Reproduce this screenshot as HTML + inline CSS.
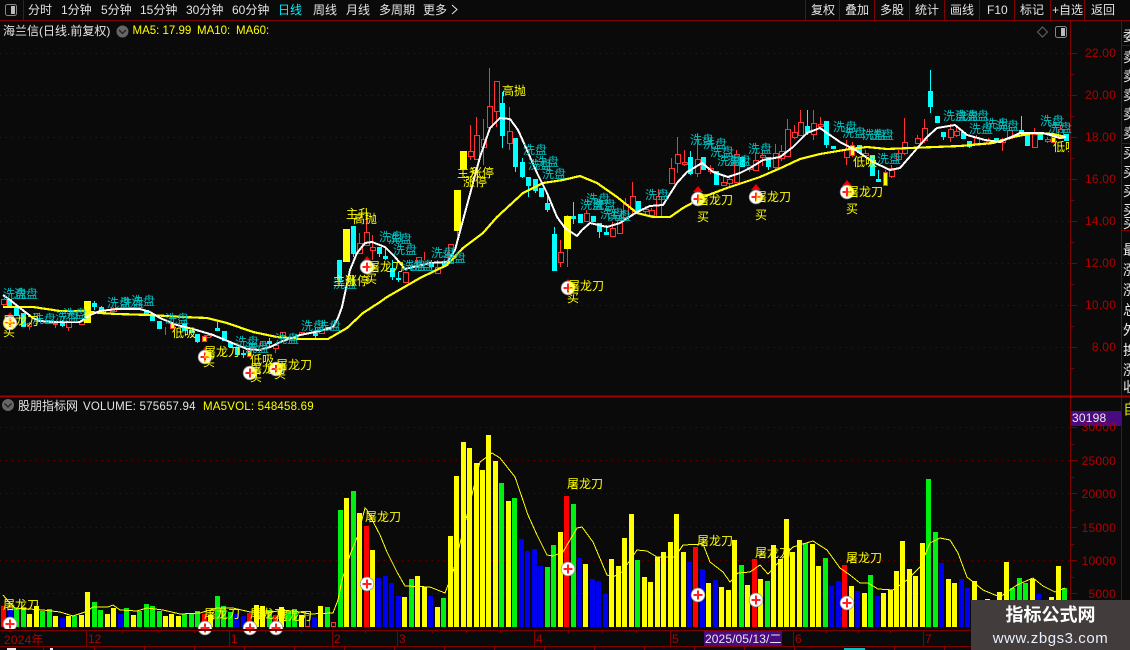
<!DOCTYPE html>
<html><head><meta charset="utf-8">
<style>
html,body{margin:0;padding:0;background:#0a0a0a}
#p{position:relative;width:1130px;height:650px;overflow:hidden;background:#0a0a0a;font-family:"Liberation Sans","WenQuanYi Zen Hei","Noto Sans CJK SC",sans-serif}
#v{position:absolute;left:1.3px;top:420px;height:207px;display:flex;align-items:flex-end}
#v i{flex:none;width:6.48px;display:block}
#v i::before{content:"";display:block;width:5px;height:100%;box-sizing:border-box}
.y::before{background:#ff0}.g::before{background:#00f010}.b::before{background:#0000f0}.r::before{background:#f00}.h::before{border:1px solid #f33}
svg{position:absolute;left:0;top:0}
text{font-family:"Liberation Sans","WenQuanYi Zen Hei","Noto Sans CJK SC",sans-serif;font-size:12px}
.c text{fill:#00c4c4}
.l text{fill:#ff0}
.ax text{fill:#b00000;text-anchor:end;letter-spacing:.2px}
.t text{fill:#e4e4e4}
.w text{fill:#e8e8e8;font-size:14px}
#wm{position:absolute;left:971px;top:600px;width:159px;height:50px;background:#423c3c;color:#fff;text-align:center}
#wm div{font-family:"Liberation Sans","Noto Sans CJK SC",sans-serif}
</style></head><body><div id="p">
<svg width="1130" height="650" shape-rendering="crispEdges">
<g stroke="#6a0000" stroke-dasharray="1 5" stroke-width="1">
<path d="M0 53.5H1071M0 95.5H1071M0 137.5H1071M0 179.5H1071M0 221.5H1071M0 263.5H1071M0 305.5H1071M0 347.5H1071M0 427.5H1071M0 460.5H1071M0 493.5H1071M0 527.5H1071M0 560.5H1071M0 593.5H1071"/>
</g>
<g fill="none" stroke="#800000">
<path d="M0 20.5H1130M23.5 0V20M805.5 0V20M839.5 0V20M874.5 0V20M909.5 0V20M944.5 0V20M979.5 0V20M1014.5 0V20M1050.5 0V20M1084.5 0V20"/>
<path d="M1070.5 20V630M1121.5 20V650M1121 45.5H1130M1121 143.5H1130M1121 230.5H1130M1121 327.5H1130M1121 396.5H1130"/>
<path d="M1070 53.5h7M1070 74.5h4M1070 95.5h7M1070 116.5h4M1070 137.5h7M1070 158.5h4M1070 179.5h7M1070 200.5h4M1070 221.5h7M1070 242.5h4M1070 263.5h7M1070 284.5h4M1070 305.5h7M1070 326.5h4M1070 347.5h7M1070 368.5h4M1070 427.5h7M1070 444.5h4M1070 460.5h7M1070 477.5h4M1070 493.5h7M1070 510.5h4M1070 527.5h7M1070 544.5h4M1070 560.5h7M1070 577.5h4M1070 593.5h7M1070 610.5h4"/>
<path d="M0 630.5H1122M0 646.5H1122M86.5 630V646M229.5 630V646M332.5 630V646M397.5 630V646M534.5 630V646M670.5 630V646M793.5 630V646M923.5 630V646M122.5 630v3M158.5 630v3M194.5 630v3M265.5 630v3M301.5 630v3M365.5 630v3M432.5 630v3M466.5 630v3M500.5 630v3M568.5 630v3M602.5 630v3M636.5 630v3M826.5 630v3M858.5 630v3M890.5 630v3M43.5 647v3M94.5 647v3M144.5 647v3M194.5 647v3M244.5 647v3M294.5 647v3M344.5 647v3M394.5 647v3M444.5 647v3M494.5 647v3M544.5 647v3M594.5 647v3M644.5 647v3M694.5 647v3M744.5 647v3M794.5 647v3M844.5 647v3M894.5 647v3M944.5 647v3"/>
</g>
<path d="M0 396.5H1130" stroke="#a00000" stroke-width="2"/>
<rect x="1071" y="411" width="50" height="15" fill="#4a0a80"/>
<rect x="704" y="631" width="78" height="15" fill="#4a0a80"/>
</svg>

<div id="v"><i class=r style=height:21px></i><i class=b style=height:17px></i><i class=g style=height:19px></i><i class=g style=height:20px></i><i class=y style=height:13px></i><i class=y style=height:21px></i><i class=g style=height:16px></i><i class=g style=height:18px></i><i class=y style=height:11px></i><i class=b style=height:9px></i><i class=y style=height:11px></i><i class=g style=height:11px></i><i class=y style=height:12px></i><i class=y style=height:35px></i><i class=g style=height:25px></i><i class=g style=height:17px></i><i class=y style=height:13px></i><i class=y style=height:19px></i><i class=b style=height:13px></i><i class=g style=height:19px></i><i class=y style=height:12px></i><i class=g style=height:16px></i><i class=g style=height:23px></i><i class=g style=height:21px></i><i class=g style=height:16px></i><i class=y style=height:11px></i><i class=y style=height:13px></i><i class=y style=height:11px></i><i class=g style=height:13px></i><i class=g style=height:13px></i><i class=g style=height:16px></i><i class=r style=height:13px></i><i class=y style=height:12px></i><i class=g style=height:31px></i><i class=g style=height:21px></i><i class=g style=height:15px></i><i class=b style=height:13px></i><i class=b style=height:11px></i><i class=r style=height:14px></i><i class=y style=height:22px></i><i class=y style=height:21px></i><i class=g style=height:17px></i><i class=r style=height:12px></i><i class=y style=height:20px></i><i class=g style=height:16px></i><i class=g style=height:18px></i><i class=y style=height:12px></i><i class=h style=height:12px></i><i class=b style=height:10px></i><i class=y style=height:21px></i><i class=g style=height:20px></i><i class=h style=height:5px></i><i class=g style=height:117px></i><i class=y style=height:129px></i><i class=g style=height:136px></i><i class=y style=height:114px></i><i class=r style=height:101px></i><i class=y style=height:77px></i><i class=b style=height:49px></i><i class=b style=height:51px></i><i class=b style=height:44px></i><i class=b style=height:31px></i><i class=y style=height:30px></i><i class=g style=height:48px></i><i class=y style=height:51px></i><i class=y style=height:40px></i><i class=b style=height:31px></i><i class=y style=height:20px></i><i class=g style=height:29px></i><i class=y style=height:91px></i><i class=y style=height:151px></i><i class=y style=height:185px></i><i class=y style=height:179px></i><i class=y style=height:164px></i><i class=y style=height:157px></i><i class=y style=height:192px></i><i class=y style=height:166px></i><i class=g style=height:144px></i><i class=y style=height:126px></i><i class=g style=height:129px></i><i class=b style=height:88px></i><i class=b style=height:76px></i><i class=b style=height:78px></i><i class=b style=height:61px></i><i class=g style=height:60px></i><i class=g style=height:82px></i><i class=y style=height:95px></i><i class=r style=height:131px></i><i class=g style=height:123px></i><i class=b style=height:69px></i><i class=y style=height:63px></i><i class=b style=height:48px></i><i class=b style=height:46px></i><i class=b style=height:33px></i><i class=y style=height:68px></i><i class=y style=height:61px></i><i class=y style=height:89px></i><i class=y style=height:113px></i><i class=g style=height:67px></i><i class=y style=height:50px></i><i class=y style=height:45px></i><i class=y style=height:70px></i><i class=y style=height:75px></i><i class=y style=height:85px></i><i class=y style=height:113px></i><i class=y style=height:75px></i><i class=b style=height:65px></i><i class=r style=height:80px></i><i class=b style=height:58px></i><i class=y style=height:44px></i><i class=b style=height:47px></i><i class=y style=height:40px></i><i class=y style=height:37px></i><i class=y style=height:87px></i><i class=g style=height:62px></i><i class=y style=height:42px></i><i class=r style=height:68px></i><i class=y style=height:48px></i><i class=g style=height:46px></i><i class=y style=height:82px></i><i class=y style=height:68px></i><i class=y style=height:108px></i><i class=y style=height:75px></i><i class=y style=height:87px></i><i class=g style=height:84px></i><i class=y style=height:83px></i><i class=y style=height:61px></i><i class=g style=height:69px></i><i class=b style=height:41px></i><i class=b style=height:46px></i><i class=r style=height:62px></i><i class=y style=height:41px></i><i class=b style=height:36px></i><i class=y style=height:34px></i><i class=g style=height:52px></i><i class=b style=height:31px></i><i class=y style=height:34px></i><i class=y style=height:37px></i><i class=y style=height:56px></i><i class=y style=height:86px></i><i class=y style=height:58px></i><i class=y style=height:51px></i><i class=y style=height:84px></i><i class=g style=height:148px></i><i class=g style=height:95px></i><i class=b style=height:64px></i><i class=y style=height:48px></i><i class=y style=height:44px></i><i class=b style=height:48px></i><i class=b style=height:39px></i><i class=y style=height:46px></i><i class=y style=height:27px></i><i class=y style=height:28px></i><i class=y style=height:24px></i><i class=y style=height:35px></i><i class=y style=height:65px></i><i class=g style=height:39px></i><i class=g style=height:49px></i><i class=g style=height:44px></i><i class=y style=height:48px></i><i class=b style=height:33px></i><i class=y style=height:25px></i><i class=y style=height:30px></i><i class=y style=height:61px></i><i class=g style=height:39px></i></div>

<svg width="1130" height="650">
<g shape-rendering="crispEdges">
<path stroke="#f33" fill="none" d="M3.5 299v8M29.5 322v8M36.5 313v8M55.5 323v5M68.5 322v9M107.5 309v4M113.5 307v5M165.5 327v8M204.5 335v3M211.5 333v4M262.5 341v6M275.5 345v8M282.5 332v6M301.5 332v3M321.5 330v4M366.5 218v28M359.5 233v20M372.5 235v25M418.5 257v10M424.5 252v8M437.5 260v13M450.5 244v19M457.5 231v5M470.5 125v35M476.5 117v43M483.5 119v46M489.5 68v60M496.5 81v46M509.5 107v43M560.5 240v27M567.5 215v52M586.5 210v11M612.5 222v14M619.5 216v17M625.5 198v20M632.5 182v32M645.5 206v8M651.5 208v7M658.5 189v27M671.5 158v25M677.5 137v36M684.5 150v16M697.5 133v44M710.5 165v9M723.5 175v10M729.5 175v11M736.5 150v32M749.5 167v5M755.5 152v18M762.5 150v16M775.5 144v26M781.5 145v16M787.5 119v37M794.5 125v14M800.5 110v25M813.5 110v30M820.5 117v12M846.5 140v25M852.5 142v15M865.5 150v8M885.5 170v16M891.5 165v13M898.5 150v12M904.5 118v37M917.5 135v9M924.5 119v24M950.5 124v18M956.5 127v10M976.5 135v9M988.5 138v7M1002.5 138v13M1009.5 125v15M1034.5 128v19M1047.5 137v6M1060.5 125v13"/>
<path fill="none" stroke="#0ff" d="M62.5 320v7M94.5 301v9M101.5 306v7M197.5 334v9M217.5 322v9M243.5 350v8M269.5 338v9M315.5 328v10M353.5 226v31M379.5 247v10M385.5 248v12M392.5 260v20M398.5 272v10M431.5 260v9M502.5 92v56M515.5 138v34M522.5 158v20M528.5 177v20M535.5 179v14M547.5 195v17M554.5 227v44M573.5 202v22M599.5 223v15M606.5 225v10M690.5 151v24M768.5 157v13M807.5 110v25M826.5 121v27M878.5 170v12M930.5 70v43M943.5 132v8M969.5 141v7M1021.5 116v17"/>
<path fill="#0ff" d="M7 299h5v7h-5zM14 306h5v10h-5zM21 313h5v14h-5zM60 323h5v3h-5zM92 303h5v4h-5zM99 307h5v5h-5zM144 310h5v5h-5zM150 315h5v6h-5zM157 321h5v8h-5zM182 323h5v8h-5zM189 330h5v3h-5zM195 334h5v8h-5zM215 328h5v3h-5zM222 331h5v10h-5zM228 342h5v5h-5zM235 347h5v8h-5zM241 353h5v2h-5zM267 341h5v3h-5zM313 333h5v3h-5zM326 327h5v3h-5zM337 260h5v20h-5zM351 226h5v28h-5zM377 247h5v7h-5zM383 256h5v3h-5zM390 268h5v9h-5zM396 278h5v2h-5zM429 262h5v5h-5zM442 263h5v3h-5zM500 103h5v33h-5zM513 138h5v29h-5zM520 162h5v15h-5zM526 177h5v9h-5zM533 179h5v12h-5zM539 188h5v9h-5zM545 203h5v7h-5zM552 234h5v37h-5zM571 216h5v3h-5zM578 214h5v9h-5zM591 216h5v6h-5zM597 223h5v9h-5zM604 232h5v3h-5zM636 201h5v10h-5zM688 157h5v17h-5zM701 157h5v13h-5zM714 171h5v14h-5zM740 157h5v10h-5zM766 157h5v10h-5zM805 126h5v7h-5zM824 121h5v24h-5zM831 146h5v3h-5zM857 145h5v8h-5zM870 155h5v21h-5zM876 179h5v3h-5zM928 91h5v16h-5zM935 116h5v7h-5zM941 132h5v5h-5zM961 132h5v7h-5zM967 141h5v6h-5zM994 138h5v4h-5zM1019 130h5v3h-5zM1025 135h5v11h-5zM1038 133h5v7h-5zM1064 134h5v7h-5z"/>
<path fill="#0a0a0a" stroke="#f33" d="M1.5 299.5h5v5h-5zM27.5 323.5h4v3h-4zM34.5 313.5h5v8h-5zM53.5 323.5h4v1h-4zM66.5 322.5h5v5h-5zM79.5 321.5h5v3h-5zM105.5 310.5h5v3h-5zM111.5 308.5h5v3h-5zM130.5 307.5h5v2h-5zM205.5 335.5h5v2h-5zM260.5 341.5h5v4h-5zM273.5 345.5h5v3h-5zM280.5 332.5h5v5h-5zM299.5 332.5h5v2h-5zM319.5 330.5h5v3h-5zM357.5 243.5h5v10h-5zM364.5 232.5h5v13h-5zM370.5 247.5h5v3h-5zM403.5 272.5h5v10h-5zM416.5 257.5h5v10h-5zM435.5 267.5h5v6h-5zM448.5 244.5h5v19h-5zM468.5 151.5h5v5h-5zM474.5 135.5h5v24h-5zM481.5 139.5h5v8h-5zM487.5 106.5h5v21h-5zM494.5 81.5h5v30h-5zM507.5 131.5h5v12h-5zM558.5 252.5h5v10h-5zM584.5 213.5h5v8h-5zM610.5 228.5h5v8h-5zM617.5 220.5h5v13h-5zM623.5 204.5h5v14h-5zM630.5 196.5h5v13h-5zM643.5 209.5h5v2h-5zM649.5 210.5h5v5h-5zM656.5 196.5h5v20h-5zM669.5 168.5h5v15h-5zM675.5 154.5h5v9h-5zM682.5 162.5h5v2h-5zM695.5 159.5h5v14h-5zM708.5 168.5h5v3h-5zM721.5 182.5h5v3h-5zM727.5 179.5h5v4h-5zM734.5 154.5h5v28h-5zM747.5 167.5h5v2h-5zM753.5 160.5h5v10h-5zM760.5 155.5h5v2h-5zM773.5 153.5h5v14h-5zM779.5 151.5h5v7h-5zM785.5 129.5h5v27h-5zM792.5 132.5h5v5h-5zM798.5 122.5h5v13h-5zM811.5 123.5h5v11h-5zM818.5 124.5h5v2h-5zM844.5 149.5h5v8h-5zM863.5 153.5h5v2h-5zM889.5 168.5h5v8h-5zM896.5 153.5h5v6h-5zM902.5 142.5h5v11h-5zM915.5 138.5h5v5h-5zM922.5 128.5h5v12h-5zM948.5 129.5h5v8h-5zM954.5 131.5h5v4h-5zM974.5 137.5h5v6h-5zM986.5 140.5h5v3h-5zM1000.5 139.5h5v3h-5zM1007.5 130.5h5v8h-5zM1032.5 134.5h5v13h-5zM1045.5 139.5h5v2h-5zM1058.5 129.5h5v9h-5z"/>
<path fill="#ff0" d="M84 301h7v22h-7zM343 229h7v33h-7zM454 190h7v41h-7zM460 151h7v18h-7zM564 216h7v33h-7z"/>
<path fill="#ff0" stroke="#f33" d="M170.5 323.5h4v5h-4zM202.5 336.5h4v5h-4zM247.5 350.5h4v6h-4zM850.5 145.5h4v10h-4zM883.5 172.5h4v13h-4zM1051.5 137.5h4v5h-4z"/>
</g>
<g fill="none" shape-rendering="crispEdges">
<polyline stroke="#ff0" stroke-width="2.2" points="3,307 33,307 60,311 83,311 100,313 117,314 150,315 183,317 207,318 227,323 253,332 277,337 300,339 328,339 347,328 363,313 380,302 387,297 420,278 447,265 463,248 483,233 497,217 523,193 543,183 563,180 580,176 597,183 617,197 637,213 653,217 670,217 683,208 703,197 727,188 760,177 783,167 800,159 820,154 850,149 867,147 887,149 910,148 960,146 993,143 1013,137 1033,133 1053,134 1066,137"/>
<polyline stroke="#fff" stroke-width="2" points="3,295 10,300 20,308 33,318 40,321 53,322 80,322 90,315 100,311 117,309 140,309 150,312 160,318 177,325 193,329 213,335 230,342 247,349 260,350 270,347 283,341 300,335 320,331 333,327 338,318 342,307 350,270 357,253 365,243 372,242 385,247 395,257 405,269 430,263 447,262 455,250 463,220 473,183 480,157 490,128 500,118 510,119 518,130 527,150 537,173 547,193 557,217 565,228 577,236 582,230 590,223 607,227 620,223 637,212 650,206 663,205 677,183 687,172 702,163 713,172 728,177 740,173 750,168 763,160 780,157 793,147 807,133 820,128 827,133 840,142 857,151 873,162 890,170 900,168 913,153 927,137 937,128 955,125 967,135 985,140 1000,142 1020,133 1043,133 1060,138 1066,137"/>
<polyline stroke="#ff0" stroke-width="1" points="3,595 8,601 15,608 43,610 60,612 73,616 85,612 93,607 108,607 113,605 120,610 137,611 147,608 163,610 180,614 200,613 217,608 233,608 250,612 267,613 283,610 300,612 310,614 333,613 338,600 342,580 350,555 358,535 365,508 367,510 380,535 387,552 397,572 405,586 430,587 445,593 453,572 467,515 480,462 492,453 500,458 515,477 528,515 537,535 547,555 553,556 563,552 577,528 582,527 593,542 607,575 613,577 622,572 637,550 647,551 657,557 675,557 683,545 703,544 710,562 723,572 730,582 738,573 750,572 760,565 768,574 778,563 793,547 813,541 827,550 840,568 850,575 860,583 868,583 878,589 893,590 907,580 920,567 930,543 940,538 950,540 958,553 967,577 983,590 1000,597 1017,585 1033,578 1043,586 1055,592 1065,588"/>
</g>
<g class="c">
<text x="3" y="298">洗盘</text><text x="14" y="298">洗盘</text><text x="32" y="323">洗盘</text><text x="55" y="321">洗盘</text><text x="63" y="318">洗盘</text><text x="107" y="307">洗盘</text><text x="120" y="307">洗盘</text><text x="131" y="305">洗盘</text><text x="165" y="323">洗盘</text><text x="235" y="346">洗盘</text><text x="245" y="352">洗盘</text><text x="275" y="343">洗盘</text><text x="301" y="330">洗盘</text><text x="317" y="330">洗盘</text><text x="333" y="288">洗盘</text>
<text x="379" y="241">洗盘</text><text x="388" y="243">洗盘</text><text x="393" y="254">洗盘</text><text x="402" y="270">洗盘</text><text x="410" y="270">洗盘</text><text x="431" y="257">洗盘</text><text x="442" y="262">洗盘</text><text x="523" y="154">洗盘</text><text x="528" y="169">洗盘</text><text x="535" y="166">洗盘</text><text x="542" y="178">洗盘</text><text x="580" y="209">洗盘</text><text x="586" y="203">洗盘</text><text x="592" y="209">洗盘</text><text x="600" y="218">洗盘</text><text x="607" y="220">洗盘</text><text x="645" y="199">洗盘</text>
<text x="690" y="144">洗盘</text><text x="703" y="148">洗盘</text><text x="710" y="156">洗盘</text><text x="717" y="165">洗盘</text><text x="727" y="165">洗盘</text><text x="748" y="153">洗盘</text><text x="833" y="131">洗盘</text><text x="842" y="137">洗盘</text><text x="862" y="139">洗盘</text><text x="870" y="139">洗盘</text><text x="877" y="163">洗盘</text><text x="943" y="120">洗盘</text><text x="955" y="120">洗盘</text><text x="965" y="120">洗盘</text><text x="969" y="133">洗盘</text><text x="985" y="128">洗盘</text><text x="995" y="130">洗盘</text><text x="1040" y="125">洗盘</text><text x="1048" y="132">洗盘</text>
</g>
<defs><g id="b"><circle r="6.8" fill="#fff" stroke="#9a9a9a" stroke-width=".8"/><path d="M-4.5 0H4.5M0-4.5V4.5" stroke="#f22" stroke-width="2"/></g></defs>
<path fill="#e00" d="M698 186l5 6h-10zM756 184l5 6h-10zM847 180l5 6h-10zM568 279l4 5h-8zM367 256l4 5h-8zM205 347l3 4h-6zM10 312l3 4h-6z"/>
<use href="#b" x="10" y="323"/><use href="#b" x="205" y="357"/><use href="#b" x="250" y="373"/><use href="#b" x="276" y="369"/><use href="#b" x="367" y="267"/><use href="#b" x="568" y="288"/><use href="#b" x="698" y="199"/><use href="#b" x="756" y="197"/><use href="#b" x="847" y="192"/>
<g class="l">
<text x="3" y="325">屠龙刀</text><text x="3" y="336">买</text><text x="172" y="337">低吸</text><text x="204" y="356">屠龙刀</text><text x="203" y="366">买</text><text x="250" y="364">低吸</text><text x="250" y="373">屠龙刀</text><text x="250" y="381">买</text><text x="276" y="369">屠龙刀</text><text x="274" y="378">买</text>
<text x="346" y="218">主升</text><text x="353" y="223">高抛</text><text x="333" y="285">主升</text><text x="345" y="285">涨停</text><text x="368" y="271">屠龙刀</text><text x="365" y="283">买</text>
<text x="457" y="177">主升</text><text x="463" y="186">涨停</text><text x="470" y="177">涨停</text><text x="502" y="95">高抛</text><text x="568" y="290">屠龙刀</text><text x="567" y="302">买</text>
<text x="697" y="204">屠龙刀</text><text x="697" y="221">买</text><text x="755" y="201">屠龙刀</text><text x="755" y="219">买</text><text x="847" y="196">屠龙刀</text><text x="846" y="213">买</text><text x="853" y="166">低吸</text>
<svg x="0" y="0" width="1069" height="650"><text x="1053" y="151">低吸</text></svg>
<text x="3" y="609">屠龙刀</text><text x="204" y="618">屠龙刀</text><text x="250" y="618">屠龙刀</text><text x="276" y="620">屠龙刀</text><text x="365" y="521">屠龙刀</text><text x="567" y="488">屠龙刀</text><text x="697" y="545">屠龙刀</text><text x="755" y="557">屠龙刀</text><text x="846" y="562">屠龙刀</text>
</g>
<use href="#b" x="10" y="624"/><use href="#b" x="205" y="628"/><use href="#b" x="250" y="628"/><use href="#b" x="276" y="628"/><use href="#b" x="367" y="584"/><use href="#b" x="568" y="569"/><use href="#b" x="698" y="595"/><use href="#b" x="756" y="600"/><use href="#b" x="847" y="603"/>
<rect x="0" y="629" width="1071" height="2" fill="#0a0a0a"/>
<path d="M0 630.5H1122" stroke="#800000" shape-rendering="crispEdges"/>
<g class="t">
<text x="28" y="14">分时</text><text x="61" y="14">1分钟</text><text x="101" y="14">5分钟</text><text x="140" y="14">15分钟</text><text x="186" y="14">30分钟</text><text x="232" y="14">60分钟</text><text x="278" y="14" style="fill:#00f0ff">日线</text><text x="313" y="14">周线</text><text x="346" y="14">月线</text><text x="379" y="14">多周期</text><text x="423" y="14">更多</text>
<text x="811" y="14">复权</text><text x="845" y="14">叠加</text><text x="880" y="14">多股</text><text x="915" y="14">统计</text><text x="950" y="14">画线</text><text x="987" y="14">F10</text><text x="1020" y="14">标记</text><text x="1052" y="14">+自选</text><text x="1091" y="14">返回</text>
<text x="3" y="35">海兰信(日线.前复权)</text>
<text x="18" y="410">股朋指标网</text><text x="83" y="410" style="font-size:11.5px;letter-spacing:.2px">VOLUME: 575657.94</text>
</g>
<path d="M452 5l5 4.5-5 4.5" fill="none" stroke="#e4e4e4"/>
<g fill="#ff0">
<text x="132.5" y="34" style="font-size:11.5px">MA5: 17.99</text><text x="197" y="34" style="font-size:11.5px">MA10:</text><text x="236" y="34" style="font-size:11.5px">MA60:</text>
<text x="203" y="410" style="font-size:11.5px;letter-spacing:.2px">MA5VOL: 548458.69</text>
</g>
<rect x="5.5" y="4.5" width="11" height="11" rx="2" fill="none" stroke="#888"/><rect x="11" y="6" width="4" height="8" fill="#bbb"/>
<rect x="1055.5" y="26.5" width="11" height="11" rx="2" fill="none" stroke="#888"/><rect x="1061" y="28" width="4" height="8" fill="#bbb"/>
<path d="M1042.5 27l5 5-5 5-5-5z" fill="none" stroke="#666"/>
<circle cx="122.5" cy="31.5" r="6" fill="#666"/><path d="M119 30l3.5 3.5 3.5-3.5" fill="none" stroke="#222" stroke-width="1.3"/>
<circle cx="8" cy="405" r="6" fill="#666"/><path d="M4.5 403.500l3.5 3.5 3.5-3.5" fill="none" stroke="#222" stroke-width="1.3"/>
<g class="ax">
<text x="1116" y="57">22.00</text><text x="1116" y="99">20.00</text><text x="1116" y="141">18.00</text><text x="1116" y="183">16.00</text><text x="1116" y="225">14.00</text><text x="1116" y="267">12.00</text><text x="1116" y="309">10.00</text><text x="1116" y="351">8.00</text>
<text x="1116" y="431">30000</text><text x="1116" y="465">25000</text><text x="1116" y="498">20000</text><text x="1116" y="532">15000</text><text x="1116" y="565">10000</text><text x="1116" y="598">5000</text>
</g>
<rect x="1071" y="411" width="50" height="11" fill="#4a0a80"/>
<text x="1072" y="422" fill="#e8e8e8" style="letter-spacing:.2px">30198</text>
<g fill="#b00000">
<text x="4" y="644" style="letter-spacing:.2px">2024年</text><text x="88" y="643">12</text><text x="231" y="643">1</text><text x="334" y="643">2</text><text x="399" y="643">3</text><text x="536" y="643">4</text><text x="672" y="643">5</text><text x="795" y="643">6</text><text x="925" y="643">7</text>
</g>
<text x="705" y="643" fill="#e8e8e8" style="letter-spacing:.1px">2025/05/13/二</text>
<svg x="1122" y="20" width="8" height="630">
<g class="w"><text x="1" y="21">委</text><text x="1" y="42">卖</text><text x="1" y="61">卖</text><text x="1" y="80">卖</text><text x="1" y="99">卖</text><text x="1" y="118">卖</text><text x="1" y="138">买</text><text x="1" y="157">买</text><text x="1" y="176">买</text><text x="1" y="195">买</text><text x="1" y="208">买</text><text x="1" y="235">最</text><text x="1" y="255">涨</text><text x="1" y="275">涨</text><text x="1" y="295">总</text><text x="1" y="315">外</text><text x="1" y="335">换</text><text x="1" y="355">涨</text><text x="1" y="372">收</text></g>
<text x="1" y="394" fill="#d8d800" style="font-size:15px">自</text>
</svg>
<g fill="#e8e8e8" shape-rendering="crispEdges"><rect x="7" y="648" width="9" height="2"/><rect x="50" y="648" width="3" height="2"/></g>
<rect x="844" y="648" width="21" height="2" fill="#00c4c4"/>
</svg>
<div id="wm">
<div style="font-size:18px;font-weight:bold;line-height:22px;margin-top:4px">指标公式网</div>
<div style="font-size:15px;line-height:18px;color:#e8f0ff;letter-spacing:.55px;margin-top:4px">www.zbgs3.com</div>
</div>
</div></body></html>
